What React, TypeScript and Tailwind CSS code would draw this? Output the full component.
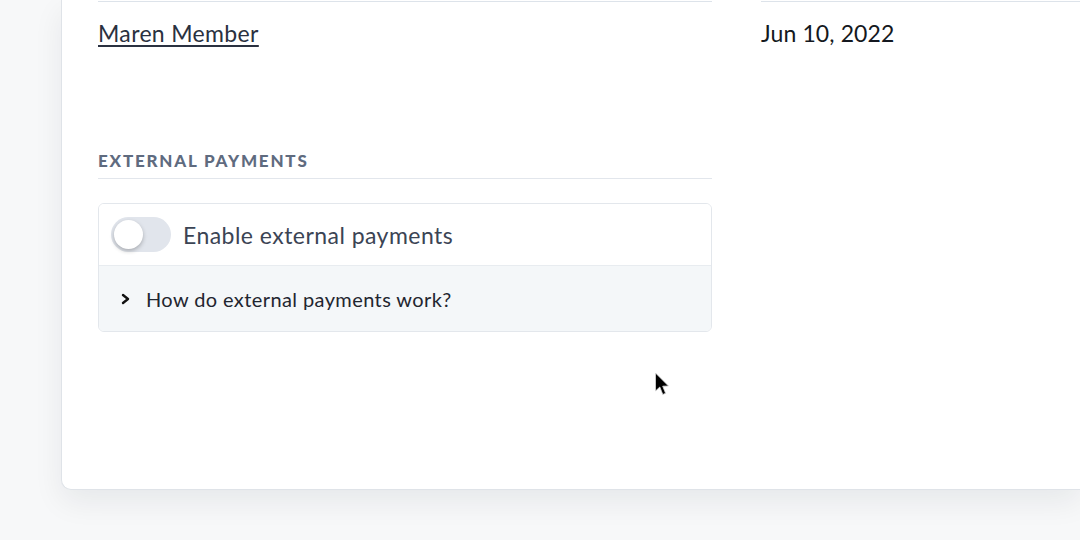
import { useState } from 'react';

export default function App() {
  const [enabled, setEnabled] = useState(false);
  const [open, setOpen] = useState(false);

  return (
    <div
      className="relative w-[1080px] h-[540px] overflow-hidden bg-[#f7f8f9] pl-[61px]"
      style={{ fontFamily: '"Lato", "Open Sans", sans-serif' }}
    >
      {/* Carte principale */}
      <div className="h-[490px] bg-white border-l border-b border-[#dfe3e8] rounded-bl-[10px] shadow-[0_12px_30px_rgba(15,23,42,0.07)] pl-[36px] pt-[1px]">
        <div className="grid grid-cols-[614px_1fr] gap-x-[49px]">
          <div className="border-t border-[#dde3ea]">
            <div className="pt-[17px]">
              <a href="#" className="text-[23px] leading-[28px] tracking-[0.015em] text-[#2a3140] underline underline-offset-[3px] decoration-[1.5px]">
                Maren Member
              </a>
            </div>

            <h3 className="mt-[103px] pb-[7px] border-b border-[#e2e6ec] text-[17px] leading-[20px] font-black tracking-[0.105em] text-[#5f6b7f] uppercase">
              External payments
            </h3>

            <div className="mt-6 border border-[#e3e7ec] rounded-[6px] overflow-hidden">
              <div className="flex items-center gap-3 px-3 py-[13px] bg-white">
                <button
                  onClick={() => setEnabled(!enabled)}
                  className={`relative w-[60px] h-[35px] rounded-full ${enabled ? 'bg-[#3b82f6]' : 'bg-[#e1e5ec]'}`}
                >
                  <span
                    className={`absolute top-[3px] w-[29px] h-[29px] rounded-full bg-white shadow-[0_2px_4px_rgba(0,0,0,0.25)] ${enabled ? 'left-[28px]' : 'left-[3px]'}`}
                  />
                </button>
                <span className="text-[23px] leading-[28px] tracking-[0.02em] text-[#3b4454]">Enable external payments</span>
              </div>
              <button
                onClick={() => setOpen(!open)}
                className="w-full h-[66px] flex items-center gap-[15px] pl-[21px] border-t border-[#e8ecf0] bg-[#f4f7f9] text-left"
              >
                <svg width="11" height="12" viewBox="0 0 11 12" className={open ? 'rotate-90' : ''}>
                  <path d="M3 2 L8 6 L3 10" fill="none" stroke="#111" strokeWidth="2.4" strokeLinecap="round" strokeLinejoin="round" />
                </svg>
                <span className="text-[20px] leading-[24px] tracking-[0.02em] text-[#1f2630]">How do external payments work?</span>
              </button>
            </div>
          </div>

          <div className="border-t border-[#dde3ea]">
            <div className="pt-[17px] text-[23px] leading-[28px] tracking-[0.005em] text-[#141820]">Jun 10, 2022</div>
          </div>
        </div>
      </div>

      {/* Curseur */}
      <svg className="absolute left-[654px] top-[372px]" width="16" height="26" viewBox="0 0 16 26">
        <path d="M1.5 1 L1.5 19 L5.8 15 L8.8 22.5 L11.6 21.3 L8.7 14.2 L14.5 14 Z" fill="#000" stroke="#d9d9d9" strokeWidth="0.8" />
      </svg>
    </div>
  );
}
